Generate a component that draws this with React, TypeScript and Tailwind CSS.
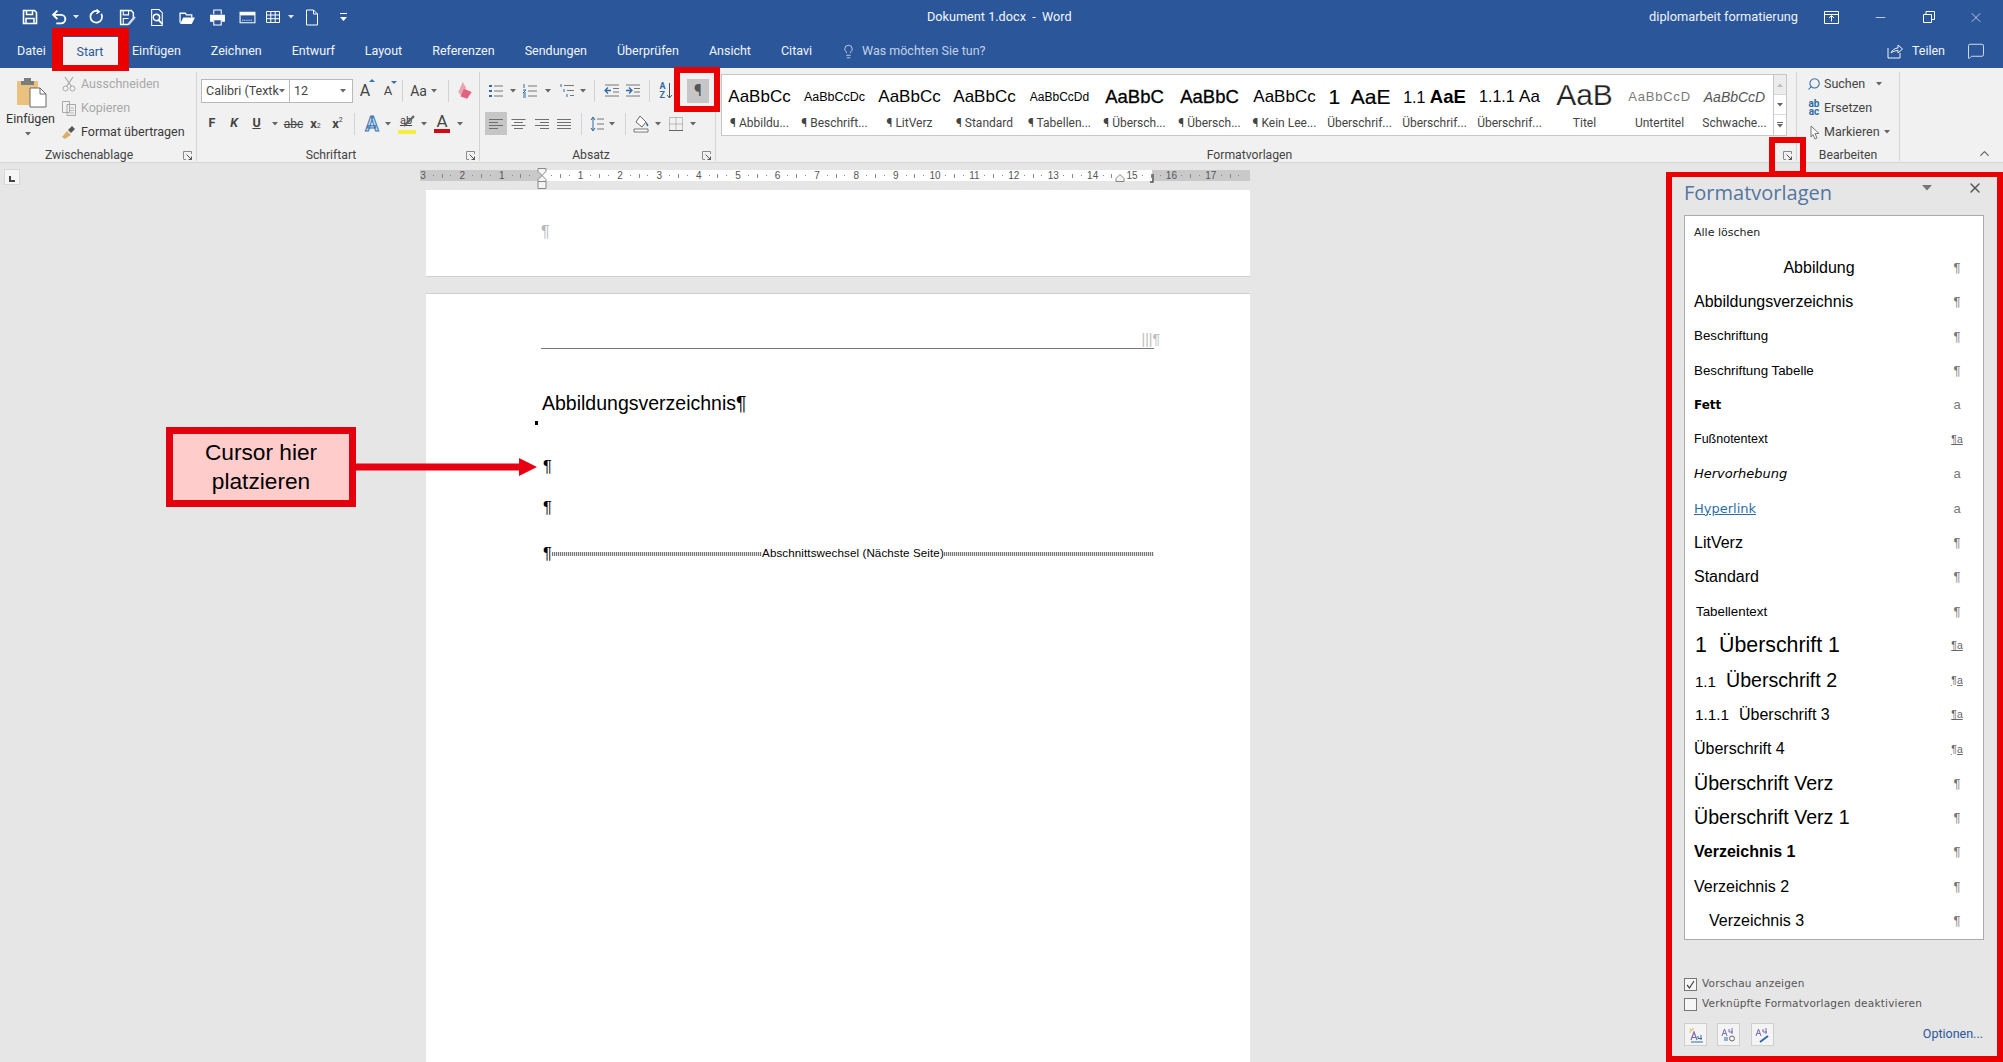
import React from "react";
import { Lightbulb, Minus, Search, X, ChevronUp, MessageSquare } from "lucide-react";

const W = "#ffffff";

function Ic({ w = 16, h = 16, box = "0 0 16 16", children }: { w?: number; h?: number; box?: string; children: React.ReactNode }) {
  return (
    <svg width={w} height={h} viewBox={box} fill="none" className="shrink-0">
      {children}
    </svg>
  );
}

function Caret({ color = "#666" }: { color?: string }) {
  return (
    <svg width="6" height="4" viewBox="0 0 6 4" className="shrink-0">
      <path d="M0 0h6L3 3.5z" fill={color} />
    </svg>
  );
}

// fixed width cell for a ribbon tool
function Cell({ w, className = "", children }: { w: number; className?: string; children?: React.ReactNode }) {
  return (
    <div className={`flex items-center justify-center h-full shrink-0 ${className}`} style={{ width: w }}>
      {children}
    </div>
  );
}

function Sep({ w, h = 22 }: { w: number; h?: number }) {
  return (
    <Cell w={w}>
      <div className="w-px bg-[#d2d2d2]" style={{ height: h }} />
    </Cell>
  );
}

function Launcher() {
  return (
    <div className="w-[18px] flex justify-center">
      <svg width="9" height="9" viewBox="0 0 9 9">
        <path d="M.5 8V.5H8.5V3M.5 8.5H3" stroke="#8a8a8a" fill="none" />
        <path d="M3.5 3.5L8.5 8.5M8.5 5.5v3h-3" stroke="#555" fill="none" />
      </svg>
    </div>
  );
}

function GroupLabel({ label, launcher = true }: { label: string; launcher?: boolean }) {
  return (
    <div className="h-[12px] flex items-center mt-auto">
      <div className="flex-1 text-center text-[12.2px] leading-[12px] text-[#444]">{label}</div>
      {launcher && <Launcher />}
    </div>
  );
}

function QatBar() {
  return (
    <div className="h-[34px] shrink-0 flex items-center text-white relative">
      <div className="flex items-center h-[20px] pl-[22px]">
        <Cell w={16}>
          <Ic>
            <path d="M1.5 1.5h11l2 2v11h-13z" stroke={W} strokeWidth="1.6" />
            <path d="M4.5 1.5v4h6v-4M4 14.5v-5h8v5" stroke={W} strokeWidth="1.5" />
          </Ic>
        </Cell>
        <div className="ml-[13px] flex items-center">
          <Ic w={17} h={17}>
            <path d="M2.5 5.5h7a4 4 0 0 1 0 8H5" stroke={W} strokeWidth="1.8" />
            <path d="M6 1.5l-4 4 4 4" stroke={W} strokeWidth="1.8" />
          </Ic>
          <div className="ml-[5px]"><Caret color="#dfe6f2" /></div>
        </div>
        <Cell w={20} className="ml-[7px]">
          <Ic w={17} h={17}>
            <path d="M12.5 4.5a5.5 5.5 0 1 1-3-2.4" stroke={W} strokeWidth="1.6" />
            <path d="M8 0.5l2.5 2-2.5 2" stroke={W} strokeWidth="1.4" />
          </Ic>
        </Cell>
        <Cell w={16} className="ml-[13px]">
          <Ic w={17} h={17}>
            <path d="M1.5 1.5h10l2 2v5l-5 6h-7z" stroke={W} strokeWidth="1.4" />
            <path d="M4 1.5v4h5v-4M4 14v-5h5" stroke={W} />
            <path d="M9 14.5l6-7" stroke="#cfd9ea" strokeWidth="2" />
          </Ic>
        </Cell>
        <Cell w={18} className="ml-[13px]">
          <Ic w={17} h={17}>
            <path d="M2.5.5h7l3 3v12h-10z" stroke={W} />
            <circle cx="7" cy="8" r="3" stroke={W} strokeWidth="1.3" />
            <path d="M9 10.5l3.5 3.5" stroke={W} strokeWidth="1.6" />
          </Ic>
        </Cell>
        <Cell w={18} className="ml-[12px]">
          <Ic w={17} h={17}>
            <path d="M1 13V4h5l1 1.5h5V8" stroke={W} strokeWidth="1.2" />
            <path d="M1 14l3-6h11l-3 6z" fill={W} />
          </Ic>
        </Cell>
        <Cell w={18} className="ml-[12px]">
          <Ic w={17} h={17}>
            <path d="M4.5 5V1h7v4" stroke={W} />
            <path d="M1 5.5h14V12h-3v-2H4v2H1z" fill={W} />
            <path d="M4.5 10h7v5h-7z" stroke={W} />
          </Ic>
        </Cell>
        <Cell w={18} className="ml-[12px]">
          <Ic w={17} h={17}>
            <path d="M1 3h14v10H1z" stroke={W} />
            <path d="M1 3h14v3H1z" fill={W} />
            <path d="M3 10.5h10" stroke={W} strokeDasharray="1 1" />
          </Ic>
        </Cell>
        <Cell w={16} className="ml-[9px]">
          <Ic>
            <path d="M1.5 2.5h13v11h-13zM1.5 6h13M1.5 9.7h13M5.8 2.5v11M10.2 2.5v11" stroke={W} />
          </Ic>
        </Cell>
        <Cell w={14} className="ml-[3px]"><Caret color="#dfe6f2" /></Cell>
        <Cell w={16} className="ml-[6px]">
          <Ic w={16} h={17}>
            <path d="M2.5.5h7l4 4v11h-11z" stroke={W} />
            <path d="M9.5.5v4h4" stroke={W} />
          </Ic>
        </Cell>
        <Cell w={10} className="ml-[18px]">
          <svg width="7" height="9" viewBox="0 0 7 9">
            <path d="M0 .5h7" stroke={W} />
            <path d="M0 4h7L3.5 8z" fill={W} />
          </svg>
        </Cell>
      </div>
      <div className="absolute left-[927px] top-[8px] text-[12.7px] leading-[18px] text-[#f2f5fa] whitespace-pre">Dokument 1.docx  -  Word</div>
      <div className="ml-auto flex items-center h-[20px]">
        <span className="text-[12.8px] text-[#eef2f8] mr-[24px]">diplomarbeit formatierung</span>
        <Cell w={18}>
          <Ic w={15} h={13} box="0 0 15 13">
            <path d="M.5.5h14v12H.5zM.5 3.5h14" stroke={W} />
            <path d="M7.5 10.5V5M5 7l2.5-2.5L10 7" stroke={W} />
          </Ic>
        </Cell>
        <Cell w={16} className="ml-[32px]"><Minus size={15} strokeWidth={1.1} /></Cell>
        <Cell w={16} className="ml-[33px]">
          <Ic w={12} h={12} box="0 0 12 12">
            <path d="M.5 3.5h8v8h-8zM3 3.5v-3h8.5v8H8.5" stroke={W} />
          </Ic>
        </Cell>
        <Cell w={16} className="ml-[31px]"><X size={17} strokeWidth={1} /></Cell>
        <div className="w-[19px]" />
      </div>
    </div>
  );
}

const tabs = ["Einfügen", "Zeichnen", "Entwurf", "Layout", "Referenzen", "Sendungen", "Überprüfen", "Ansicht", "Citavi"];

function TabRow() {
  return (
    <div className="h-[34px] shrink-0 flex items-end text-[12.5px] text-[#f2f5fa]">
      <div className="w-[62px] h-full flex items-center pl-[17px]">Datei</div>
      <div className="w-[56px] h-[31px] flex items-center justify-center bg-[#f1f1f1] text-[#2b579a]">Start</div>
      <div className="flex items-center h-full gap-[30px] pl-[14px]">
        {tabs.map((t) => (
          <span key={t}>{t}</span>
        ))}
        <span className="flex items-center text-[#c3d2e8] gap-[6px] -ml-[1px]">
          <Lightbulb size={15} strokeWidth={1.2} className="text-[#e6ecf6]" />
          Was möchten Sie tun?
        </span>
      </div>
      <div className="ml-auto h-full flex items-center pr-[18px]">
        <Ic w={18} h={16}>
          <path d="M1 5v10h12v-5" stroke="#f2f5fa" />
          <path d="M4 10c1-3 4-5 7-5V2l4.5 4-4.5 4V7.5c-3 0-5 1-7 2.5z" stroke="#f2f5fa" />
        </Ic>
        <span className="ml-[8px] mr-[22px]">Teilen</span>
        <MessageSquare size={18} strokeWidth={1.1} />
      </div>
    </div>
  );
}

function ClipboardGroup() {
  return (
    <div className="w-[197px] shrink-0 h-full flex flex-col border-r border-[#d4d4d4]">
      <div className="flex flex-1">
        <div className="w-[61px] flex flex-col items-center pt-[5px]">
          <svg width="32" height="31" viewBox="0 0 32 31">
            <path d="M2 4h21v24H2z" fill="#e9c27f" />
            <path d="M9 1h7v3h3v4H6V4h3z" fill="#7c7c7c" />
            <path d="M15 11h10l6 6v13H15z" fill="#fff" stroke="#6a6a6a" />
            <path d="M25 11v6h6" stroke="#6a6a6a" fill="none" />
          </svg>
          <span className="text-[12.5px] leading-[16px] mt-[3px] text-[#333]">Einfügen</span>
          <div className="mt-[5px] -ml-[6px]"><Caret /></div>
        </div>
        <div className="flex flex-col text-[12.5px]">
          <div className="h-[24px] flex items-center text-[#a8a8a8]">
            <Ic>
              <circle cx="4.5" cy="12.5" r="2.5" stroke="#a8a8a8" />
              <circle cx="11.5" cy="12.5" r="2.5" stroke="#a8a8a8" />
              <path d="M5.5 10.5L12 1M10.5 10.5L4 1" stroke="#a8a8a8" strokeWidth="1.2" />
            </Ic>
            <span className="ml-[4px]">Ausschneiden</span>
          </div>
          <div className="h-[24px] flex items-center text-[#a8a8a8]">
            <Ic>
              <path d="M1.5 1.5h7v11h-7zM6 4.5h8.5v11H6z" fill="#f1f1f1" stroke="#a8a8a8" />
              <path d="M8 8h5M8 10.5h5M8 13h5" stroke="#b8b8b8" />
            </Ic>
            <span className="ml-[4px]">Kopieren</span>
          </div>
          <div className="h-[24px] flex items-center text-[#3a3a3a]">
            <Ic>
              <path d="M1 13l5-6 4 4-6 4z" fill="#d9b06b" />
              <path d="M7 6l4-4 3 3-4 4z" fill="#555" />
            </Ic>
            <span className="ml-[4px]">Format übertragen</span>
          </div>
        </div>
      </div>
      <GroupLabel label="Zwischenablage" />
    </div>
  );
}

function FontGroup() {
  return (
    <div className="w-[283px] shrink-0 h-full flex flex-col border-r border-[#d4d4d4] pl-[4px] text-[#444]">
      <div className="flex h-[24px] mt-[7px] items-center">
        <div className="w-[89px] h-full bg-white border border-[#b9b9b9] flex items-center pl-[4px] pr-[4px] text-[12.5px]">
          <span className="overflow-hidden whitespace-nowrap flex-1">Calibri (Textk</span>
          <Caret />
        </div>
        <div className="w-[63px] h-full bg-white border border-[#b9b9b9] border-l-0 flex items-center pl-[4px] pr-[6px] text-[12.5px]">
          <span className="flex-1">12</span>
          <Caret />
        </div>
        <Cell w={24} className="text-[16px]">
          <span className="relative">A<span className="absolute -right-[5px] top-0 w-0 h-0 border-x-[3px] border-x-transparent border-b-[3px] border-b-[#3573ad]" /></span>
        </Cell>
        <Cell w={22} className="text-[13px]">
          <span className="relative">A<span className="absolute -right-[5px] top-0 w-0 h-0 border-x-[3px] border-x-transparent border-t-[3px] border-t-[#3573ad]" /></span>
        </Cell>
        <Sep w={6} />
        <Cell w={37} className="text-[14px]">Aa<div className="ml-[4px]"><Caret /></div></Cell>
        <Sep w={12} />
        <Cell w={22}>
          <Ic w={20} h={20} box="0 0 18 18">
            <path d="M7 1l3 5-4 8-3-4z" fill="#e9a5b5" />
            <path d="M8 7l7 3-4 6-6-2z" fill="#e4617f" />
          </Ic>
        </Cell>
      </div>
      <div className="flex h-[23px] mt-[9px] items-center">
        <Cell w={22} className="text-[12.5px] font-bold">F</Cell>
        <Cell w={22} className="text-[12.5px] font-bold italic">K</Cell>
        <Cell w={23} className="text-[12.5px] font-bold underline">U</Cell>
        <Cell w={14}><Caret /></Cell>
        <Cell w={23} className="text-[12px] line-through">abc</Cell>
        <Cell w={21} className="text-[13px] font-bold">x<span className="text-[7px] mt-[6px] font-normal">2</span></Cell>
        <Cell w={23} className="text-[13px] font-bold">x<span className="text-[7px] -mt-[6px] font-normal">2</span></Cell>
        <Sep w={11} />
        <Cell w={24}>
          <span className="text-[20px] leading-[20px] font-bold text-[#c8dcf2] [-webkit-text-stroke:1px_#3f78b5]">A</span>
        </Cell>
        <Cell w={8}><Caret /></Cell>
        <Cell w={28}>
          <span className="relative h-[20px] w-[20px] flex justify-center">
            <span className="text-[11px] leading-[13px] underline">ab</span>
            <svg className="absolute left-[7px] top-[1px]" width="13" height="12" viewBox="0 0 13 12"><path d="M1 11L11 1" stroke="#666" strokeWidth="2.4" /></svg>
            <span className="absolute left-[2px] right-0 bottom-0 h-[4px] bg-[#f3ee3f]" />
          </span>
        </Cell>
        <Cell w={8}><Caret /></Cell>
        <Cell w={28}>
          <span className="flex flex-col items-center">
            <span className="text-[17px] leading-[15px] text-[#444]">A</span>
            <span className="w-[16px] h-[4px] bg-[#d20a14]" />
          </span>
        </Cell>
        <Cell w={8}><Caret /></Cell>
      </div>
      <GroupLabel label="Schriftart" />
    </div>
  );
}

function Lines({ kind }: { kind: "left" | "center" | "right" | "just" }) {
  const rows = kind === "just" ? [14, 14, 14, 14] : [14, 9, 14, 9];
  return (
    <Ic w={15} h={12} box="0 0 15 12">
      {rows.map((len, i) => {
        const x = kind === "center" ? (15 - len) / 2 : kind === "right" ? 15 - len : 0;
        return <path key={i} d={`M${x} ${1.5 + i * 3}h${len}`} stroke="#6f6f6f" />;
      })}
    </Ic>
  );
}

function ParagraphGroup() {
  return (
    <div className="w-[236px] shrink-0 h-full flex flex-col border-r border-[#d4d4d4] pl-[5px] text-[#444]">
      <div className="flex h-[24px] mt-[7px] items-center">
        <Cell w={22}>
          <Ic>
            <path d="M6 3h9M6 8h9M6 13h9" stroke="#777" />
            <path d="M1 2h3v2H1zM1 7h3v2H1zM1 12h3v2H1z" fill="#2f6ba8" />
          </Ic>
        </Cell>
        <Cell w={12}><Caret /></Cell>
        <Cell w={22}>
          <Ic>
            <path d="M6 3h9M6 8h9M6 13h9" stroke="#777" />
            <path d="M2 1v4M1 7h3l-3 3h3M1 12h3M1 14h3" stroke="#2f6ba8" />
          </Ic>
        </Cell>
        <Cell w={14}><Caret /></Cell>
        <Cell w={24}>
          <Ic>
            <path d="M5 2.5h10M8 7.5h7M11 12.5h4" stroke="#777" />
            <path d="M2 1v3M5 6v3M8 11v3" stroke="#2f6ba8" />
          </Ic>
        </Cell>
        <Cell w={8}><Caret /></Cell>
        <Sep w={14} />
        <Cell w={21}>
          <Ic>
            <path d="M1 2h14M9 5.5h6M9 9h6M1 13h14" stroke="#777" />
            <path d="M1 7.5h6M4 4.5l-3 3 3 3" stroke="#2f6ba8" strokeWidth="1.3" />
          </Ic>
        </Cell>
        <Cell w={22}>
          <Ic>
            <path d="M1 2h14M9 5.5h6M9 9h6M1 13h14" stroke="#777" />
            <path d="M1 7.5h6M4 4.5l3 3-3 3" stroke="#2f6ba8" strokeWidth="1.3" />
          </Ic>
        </Cell>
        <Sep w={10} />
        <Cell w={24}>
          <span className="flex items-center">
            <span className="flex flex-col text-[9px] leading-[9px] font-bold text-[#2f6ba8]">
              <span>A</span>
              <span>Z</span>
            </span>
            <svg width="7" height="16" viewBox="0 0 7 16"><path d="M3.5 0v15M1 12l2.5 3L6 12" stroke="#555" fill="none" /></svg>
          </span>
        </Cell>
        <div className="w-[9px]" />
        <Cell w={22} className="bg-[#c6c6c6] text-[16px] text-[#555]">¶</Cell>
      </div>
      <div className="flex h-[23px] mt-[9px] items-center">
        <Cell w={22} className="bg-[#c6c6c6]"><Lines kind="left" /></Cell>
        <Cell w={23}><Lines kind="center" /></Cell>
        <Cell w={23}><Lines kind="right" /></Cell>
        <Cell w={22}><Lines kind="just" /></Cell>
        <Sep w={12} />
        <Cell w={20}>
          <Ic>
            <path d="M8 3h7M8 8h7M8 13h7" stroke="#777" />
            <path d="M4 1v14M2 4l2-3 2 3M2 12l2 3 2-3" stroke="#2f6ba8" />
          </Ic>
        </Cell>
        <Cell w={10}><Caret /></Cell>
        <Sep w={16} />
        <Cell w={17}>
          <Ic w={17} h={18} box="0 0 17 18">
            <path d="M7 1l6 6-4 5-6-5z" fill="#fff" stroke="#666" />
            <path d="M13 7c2 2 3 3 2 4s-2-1-2-4z" fill="#2f6ba8" />
            <path d="M1 14h14v3H1z" fill="#fff" stroke="#777" />
          </Ic>
        </Cell>
        <Cell w={16}><Caret /></Cell>
        <Cell w={20}>
          <Ic>
            <path d="M1.5 1.5h13v13h-13zM1.5 8h13M8 1.5v13" stroke="#888" strokeDasharray="1 1" />
            <path d="M1 14.5h14" stroke="#666" />
          </Ic>
        </Cell>
        <Cell w={14}><Caret /></Cell>
      </div>
      <GroupLabel label="Absatz" />
    </div>
  );
}

const arial = "font-['Liberation_Sans',Arial,sans-serif]";
const gallery: { preview: React.ReactNode; label: string }[] = [
  { preview: <span className="text-[17px]">AaBbCc</span>, label: "¶ Abbildu..." },
  { preview: <span className="text-[12.5px]">AaBbCcDc</span>, label: "¶ Beschrift..." },
  { preview: <span className="text-[17px]">AaBbCc</span>, label: "¶ LitVerz" },
  { preview: <span className="text-[17px]">AaBbCc</span>, label: "¶ Standard" },
  { preview: <span className="text-[12px]">AaBbCcDd</span>, label: "¶ Tabellen..." },
  { preview: <span className="text-[18.5px] [-webkit-text-stroke:0.3px_#000]">AaBbC</span>, label: "¶ Übersch..." },
  { preview: <span className="text-[18.5px] [-webkit-text-stroke:0.3px_#000]">AaBbC</span>, label: "¶ Übersch..." },
  { preview: <span className="text-[17px]">AaBbCc</span>, label: "¶ Kein Lee..." },
  { preview: <span className="text-[21px] whitespace-pre [-webkit-text-stroke:0.2px_#000]">1  AaE</span>, label: "Überschrif..." },
  { preview: <span className="text-[16px] whitespace-pre">1.1 <span className="text-[18.5px] font-bold">AaE</span></span>, label: "Überschrif..." },
  { preview: <span className="text-[16px] whitespace-pre">1.1.1 <span className="text-[17px]">Aa</span></span>, label: "Überschrif..." },
  {
    preview: (
      <span className="flex items-end h-[21px] overflow-hidden -mt-[5px]">
        <span className="text-[30px] leading-[21px] text-[#222] [-webkit-text-stroke:0.25px_#ffffff]">AaB</span>
      </span>
    ),
    label: "Titel",
  },
  { preview: <span className="text-[13px] text-[#7a7a7a] tracking-[0.8px]">AaBbCcD</span>, label: "Untertitel" },
  { preview: <span className="text-[14px] italic text-[#555]">AaBbCcD</span>, label: "Schwache..." },
];

function StylesGroup() {
  return (
    <div className="w-[1081px] shrink-0 h-full flex flex-col border-r border-[#d4d4d4] pl-[5px]">
      <div className="flex mt-[2px] h-[62px] w-[1066px]">
        <div className="flex flex-1 bg-white border border-[#c6c6c6] border-r-0">
          {gallery.map((g, i) => (
            <div key={i} className="w-[75px] shrink-0 flex flex-col items-center overflow-hidden">
              <div className={`h-[42px] w-full pt-[2px] px-[5px] flex items-center justify-center overflow-hidden whitespace-nowrap text-black ${arial}`}>
                {g.preview}
              </div>
              <div className="text-[12px] leading-[12px] text-[#444] whitespace-nowrap">{g.label}</div>
            </div>
          ))}
        </div>
        <div className="w-[14px] shrink-0 flex flex-col border border-[#c6c6c6]">
          <div className="h-[20px] flex items-center justify-center bg-[#ececec] border-b border-[#d8d8d8]">
            <svg width="6" height="4" viewBox="0 0 6 4"><path d="M0 4h6L3 .5z" fill="#bdbdbd" /></svg>
          </div>
          <div className="h-[20px] flex items-center justify-center bg-white border-b border-[#d8d8d8]"><Caret /></div>
          <div className="flex-1 flex flex-col gap-[1px] items-center justify-center bg-white">
            <div className="w-[6px] h-px bg-[#666]" />
            <Caret />
          </div>
        </div>
      </div>
      <GroupLabel label="Formatvorlagen" />
    </div>
  );
}

function EditGroup() {
  return (
    <div className="w-[103px] shrink-0 h-full flex flex-col border-r border-[#d4d4d4] text-[12.5px] text-[#444]">
      <div className="flex flex-col pl-[8px]">
        <div className="h-[24px] flex items-center">
          <Cell w={18}><Search size={14} strokeWidth={1.8} className="text-[#2f6ba8] -scale-x-100" /></Cell>
          <span className="ml-[1px]">Suchen</span>
          <div className="ml-[11px]"><Caret /></div>
        </div>
        <div className="h-[24px] flex items-center">
          <Cell w={18} className="flex-col text-[10px] leading-[8px] font-bold text-[#2f6ba8]">
            <span>ab</span>
            <span>ac</span>
          </Cell>
          <span className="ml-[1px]">Ersetzen</span>
        </div>
        <div className="h-[24px] flex items-center">
          <Cell w={18}>
            <Ic>
              <path d="M5 2l8 7.5H9l2 4.5-2 1-2-4.5L5 13z" fill="#fff" stroke="#777" />
            </Ic>
          </Cell>
          <span className="ml-[1px]">Markieren</span>
          <div className="ml-[4px]"><Caret /></div>
        </div>
      </div>
      <GroupLabel label="Bearbeiten" launcher={false} />
    </div>
  );
}

function Ribbon() {
  return (
    <div className="h-[95px] shrink-0 bg-[#f1f1f1] border-b border-[#d6d6d6] pt-[4px] pb-[1px] flex">
      <ClipboardGroup />
      <FontGroup />
      <ParagraphGroup />
      <StylesGroup />
      <EditGroup />
      <div className="flex-1 flex justify-end items-end pr-[11px] text-[#666]">
        <ChevronUp size={15} />
      </div>
    </div>
  );
}

const cms = [3, 2, 1, 0, 1, 2, 3, 4, 5, 6, 7, 8, 9, 10, 11, 12, 13, 14, 15, 16, 17];

function Ruler() {
  return (
    <div className="relative w-[830px] h-[11px] mt-[1px] ml-[400px] bg-[linear-gradient(to_right,#c9c9c9_122px,#ffffff_122px,#ffffff_732px,#c9c9c9_732px)] text-[10px] leading-[11px] text-[#555]">
      <div className="flex -ml-[3px]">
        {cms.map((n, i) => (
          <div key={i} className="w-[39.4px] shrink-0 h-[11px] flex items-center">
            <span className="w-[12px] text-center">{n === 0 ? "" : n}</span>
            <div className="flex-1 flex items-center justify-around pr-[1px] text-[#888]">
              <span className="w-px h-px bg-[#888]" />
              <span className="w-px h-[4px] bg-[#888]" />
              <span className="w-px h-px bg-[#888]" />
            </div>
          </div>
        ))}
      </div>
      {/* indent markers */}
      <svg className="absolute left-[117px] -top-[2px]" width="10" height="22" viewBox="0 0 10 22">
        <path d="M1 .5h8v3l-4 4-4-4zM5 7.5l4 4v2H1v-2z" fill="#f4f4f4" stroke="#888" />
        <path d="M1 13.5h8v7H1z" fill="#f4f4f4" stroke="#888" />
      </svg>
      <svg className="absolute left-[695px] top-[3px]" width="10" height="9" viewBox="0 0 10 9">
        <path d="M1 8.5v-3l4-4 4 4v3z" fill="#f4f4f4" stroke="#888" />
      </svg>
      <svg className="absolute left-[730px] top-[4px]" width="4" height="9" viewBox="0 0 4 9">
        <path d="M3 0v8H0" stroke="#555" fill="none" strokeWidth="1.4" />
      </svg>
    </div>
  );
}

function Document() {
  return (
    <div className={`flex-1 min-w-0 flex flex-col ${arial}`}>
      <div className="flex items-start mt-[6px] h-[16px]">
        <div className="ml-[4px] w-[16px] h-[16px] bg-[#f6f6f6] border border-[#d8d8d8] flex items-end justify-center pb-[2px]">
          <div className="w-[6px] h-[6px] border-l-2 border-b-2 border-[#444]" />
        </div>
        <Ruler />
      </div>
      <div className="ml-[426px] w-[824px] mt-[5px] flex-1 flex flex-col">
        <div className="h-[87px] bg-white border-b border-[#cfcfcf] pl-[115px] pt-[33px] text-[16px] leading-[18px] text-[#b8b8b8]">¶</div>
        <div className="mt-[16px] flex-1 bg-white border-t border-[#cfcfcf] pl-[115px] pr-[96px] relative">
          <div className="h-[55px] border-b border-[#777] flex items-end justify-end text-[14px] leading-[18px] text-[#bdbdbd]">
            <span className="-mr-[6px]">|||¶</span>
          </div>
          <div className="mt-[40px] h-[30px] flex items-center text-[19.5px] text-black pl-[1px]">Abbildungsverzeichnis¶</div>
          <div className="absolute left-[109px] top-[127px] w-[3px] h-[4px] bg-black" />
          <div className="mt-[35px] h-[24px] flex items-center text-[16.5px] text-black pl-[2px]">¶</div>
          <div className="mt-[17px] h-[24px] flex items-center text-[16.5px] text-black pl-[2px]">¶</div>
          <div className="mt-[22px] h-[24px] flex items-center text-black pl-[2px]">
            <span className="text-[16.5px]">¶</span>
            <div className="flex-1 h-[4px] mt-[2px] bg-[repeating-linear-gradient(90deg,#777_0,#777_1px,#e2e2e2_1px,#e2e2e2_2px)]" />
            <span className="text-[11.6px] tracking-[0.1px]">Abschnittswechsel (Nächste Seite)</span>
            <div className="flex-1 h-[4px] mt-[2px] bg-[repeating-linear-gradient(90deg,#777_0,#777_1px,#e2e2e2_1px,#e2e2e2_2px)]" />
          </div>
        </div>
      </div>
    </div>
  );
}

type Row = { label: React.ReactNode; cls: string; mark: "p" | "a" | "pa" };

const verdanaish = "font-['DejaVu_Sans',sans-serif]";

const rows: Row[] = [
  { label: "Abbildung", cls: "text-[16px] flex-1 text-center", mark: "p" },
  { label: "Abbildungsverzeichnis", cls: "text-[16px]", mark: "p" },
  { label: "Beschriftung", cls: "text-[13.33px]", mark: "p" },
  { label: "Beschriftung Tabelle", cls: "text-[13.33px]", mark: "p" },
  { label: "Fett", cls: `text-[12px] font-bold ${verdanaish}`, mark: "a" },
  { label: "Fußnotentext", cls: "text-[12.5px]", mark: "pa" },
  { label: "Hervorhebung", cls: `text-[13px] italic ${verdanaish}`, mark: "a" },
  { label: "Hyperlink", cls: `text-[13px] underline text-[#2c6fa8] ${verdanaish}`, mark: "a" },
  { label: "LitVerz", cls: "text-[16px]", mark: "p" },
  { label: "Standard", cls: "text-[16px]", mark: "p" },
  { label: "Tabellentext", cls: "text-[13.33px] pl-[2px]", mark: "p" },
  {
    label: <span className="pl-[1px] whitespace-pre"><span className="inline-block w-[24px]">1</span>Überschrift 1</span>,
    cls: "text-[21.33px]",
    mark: "pa",
  },
  {
    label: <span className="pl-[1px]"><span className="text-[15px] inline-block w-[31px]">1.1</span>Überschrift 2</span>,
    cls: "text-[19.6px]",
    mark: "pa",
  },
  {
    label: <span className="pl-[1px]"><span className="text-[15.3px] inline-block w-[44px]">1.1.1</span>Überschrift 3</span>,
    cls: "text-[16px]",
    mark: "pa",
  },
  { label: "Überschrift 4", cls: "text-[16px]", mark: "pa" },
  { label: "Überschrift Verz", cls: "text-[19.6px]", mark: "p" },
  { label: "Überschrift Verz 1", cls: "text-[19.6px]", mark: "p" },
  { label: "Verzeichnis 1", cls: "text-[16px] font-bold", mark: "p" },
  { label: "Verzeichnis 2", cls: "text-[16px]", mark: "p" },
  { label: "Verzeichnis 3", cls: "text-[16px] pl-[15px]", mark: "p" },
];

function Mark({ kind }: { kind: Row["mark"] }) {
  if (kind === "pa") return <span className="text-[10.5px] leading-[11px] underline text-[#666]">¶a</span>;
  if (kind === "a") return <span className="text-[13px] text-[#777]">a</span>;
  return <span className="text-[13px] text-[#777]">¶</span>;
}

function StylesPane() {
  return (
    <div className="w-[336px] shrink-0 pl-[17px] pt-[9px] flex flex-col">
      <div className="h-[43px] w-[300px] flex items-start">
        <span className="text-[20px] leading-[26px] text-[#53759f] mt-[8px] font-['Open_Sans',sans-serif]">Formatvorlagen</span>
        <div className="ml-auto flex items-center mt-[8px]">
          <svg width="10" height="6" viewBox="0 0 10 6"><path d="M0 0h10L5 5.5z" fill="#777" /></svg>
          <X size={16} strokeWidth={2.2} className="ml-[35px] mr-[1px] text-[#555]" />
        </div>
      </div>
      <div className={`w-[300px] h-[725px] bg-white border border-[#ababab] flex flex-col text-black ${arial}`}>
        <div className={`h-[34.4px] flex items-center pl-[9px] text-[11px] text-[#222] ${verdanaish}`}>Alle löschen</div>
        {rows.map((r, i) => (
          <div key={i} className="h-[34.4px] flex items-center pl-[9px] pr-[13px] whitespace-nowrap">
            <span className={`${r.cls} ${r.cls.includes("flex-1") ? "" : "flex-1"}`}>{r.label}</span>
            <span className="w-[26px] flex justify-center"><Mark kind={r.mark} /></span>
          </div>
        ))}
      </div>
      <div className={`mt-[34px] flex flex-col text-[10.5px] text-[#555] tracking-[0.2px] ${verdanaish}`}>
        <label className="h-[20px] flex items-center">
          <span className="w-[13px] h-[13px] border border-[#777] bg-[#f6f6f6] flex items-center justify-center">
            <svg width="9" height="9" viewBox="0 0 9 9"><path d="M1 5l2.5 3L8 1" stroke="#444" fill="none" strokeWidth="1.2" /></svg>
          </span>
          <span className="ml-[5px]">Vorschau anzeigen</span>
        </label>
        <label className="h-[20px] flex items-center">
          <span className="w-[13px] h-[13px] border border-[#777] bg-[#f6f6f6]" />
          <span className="ml-[5px]">Verknüpfte Formatvorlagen deaktivieren</span>
        </label>
      </div>
      <div className="mt-[9px] w-[300px] flex items-center">
        <div className="w-[23px] h-[23px] bg-[#f4f4f4] border border-[#cfcfcf] flex items-center justify-center">
          <Ic>
            <path d="M2 2l2 2M5 1v2M1 5h2" stroke="#e5b94e" strokeWidth="1.2" />
            <path d="M3 13l3-8 3 8M4 10.5h4" stroke="#7a6ab0" strokeWidth="1.2" />
            <path d="M10 9v2.5h4M13 8v5" stroke="#2f6ba8" />
            <path d="M3 15h12" stroke="#2f6ba8" />
          </Ic>
        </div>
        <div className="w-[23px] h-[23px] ml-[10px] bg-[#f4f4f4] border border-[#cfcfcf] flex items-center justify-center">
          <Ic>
            <path d="M1 9l2.5-7L6 9M2 6.5h3" stroke="#7a6ab0" />
            <path d="M8 2v3h4M11 1v6" stroke="#7a6ab0" />
            <circle cx="11" cy="11.5" r="2.5" stroke="#666" />
            <path d="M3 11h4M3 13h4" stroke="#2f6ba8" />
          </Ic>
        </div>
        <div className="w-[23px] h-[23px] ml-[11px] bg-[#f4f4f4] border border-[#cfcfcf] flex items-center justify-center">
          <Ic>
            <path d="M1 9l2.5-7L6 9M2 6.5h3" stroke="#7a6ab0" />
            <path d="M8 2v3h4M11 1v6" stroke="#7a6ab0" />
            <path d="M5 15l8-6" stroke="#2f6ba8" strokeWidth="2" />
          </Ic>
        </div>
        <span className="ml-auto text-[12.5px] text-[#2b579a] mr-[1px]">Optionen...</span>
      </div>
    </div>
  );
}

export default function App() {
  return (
    <div className="relative w-[2003px] h-[1062px] overflow-hidden bg-[#e6e6e6] flex flex-col font-['Roboto',sans-serif]">
      <div className="bg-[#2b579a] shrink-0">
        <QatBar />
        <TabRow />
      </div>
      <Ribbon />
      <div className="flex-1 min-h-0 flex">
        <Document />
        <StylesPane />
      </div>

      {/* red annotation frames on top of the screenshot */}
      <div className="absolute left-[52px] top-[28px] w-[77px] h-[43px] border-x-[11px] border-t-[8px] border-b-[6px] border-[#eb0000]" />
      <div className="absolute left-[674px] top-[67px] w-[46px] h-[45px] border-[6px] border-[#eb0000]" />
      <div className="absolute left-[1769px] top-[137px] w-[37px] h-[40px] border-[6px] border-[#eb0000]" />
      <div className="absolute left-[1666px] top-[172px] w-[337px] h-[890px] border-[6px] border-t-[5px] border-[#eb0000]" />
      <div className={`absolute left-[166px] top-[427px] w-[190px] h-[80px] border-[7px] border-[#e3000f] bg-[#ffcccc] flex items-center justify-center text-center text-[22.7px] leading-[29px] text-black ${arial}`}>
        Cursor hier
        <br />
        platzieren
      </div>
      <svg className="absolute left-[356px] top-[457px]" width="181" height="20" viewBox="0 0 181 20">
        <path d="M0 6.5h163V1l18 9-18 9v-5.5H0z" fill="#e60012" />
      </svg>
    </div>
  );
}
